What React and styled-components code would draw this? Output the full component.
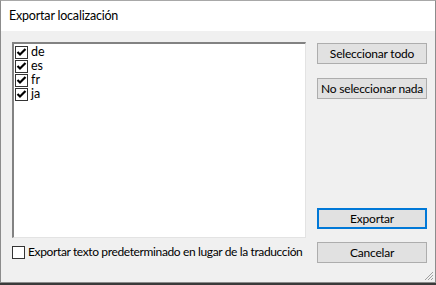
import React, { useState } from 'react';
import styled, { createGlobalStyle } from 'styled-components';

const GlobalStyle = createGlobalStyle`
  html, body {
    margin: 0;
    padding: 0;
    width: 436px;
    height: 285px;
    overflow: hidden;
    background: #3a3a3a;
  }
  * { box-sizing: border-box; }
`;

const Window = styled.div`
  width: 436px;
  height: 283px;
  display: flex;
  flex-direction: column;
  border: 1px solid #8c8c8c;
  border-top-color: #a8a8a8;
  background: #f0f0f0;
  font-family: Lato, "Noto Sans", sans-serif;
  font-size: 12px;
  letter-spacing: -0.37px;
  color: #000;
  position: relative;
`;

const TitleBar = styled.div`
  height: 30px;
  background: #fff;
  display: flex;
  align-items: center;
  padding-left: 8px;
  padding-bottom: 2px;
  font-size: 12.5px;
  letter-spacing: -0.2px;
`;

const Body = styled.div`
  flex: 1;
  display: grid;
  grid-template-columns: 294px 110px;
  column-gap: 11px;
  padding: 11px 9px 19px 11px;
`;

const LeftColumn = styled.div`
  display: flex;
  flex-direction: column;
`;

const ListBox = styled.div`
  height: 196px;
  background: #fff;
  border-style: solid;
  border-width: 2px 1px 1px 2px;
  border-color: #828282 #e3e3e3 #e3e3e3 #828282;
  padding: 1px 0 0 1px;
`;

const Item = styled.label`
  height: 14px;
  display: flex;
  align-items: center;
  gap: 3px;
  line-height: 14px;
  cursor: default;
`;

const Box = styled.span`
  width: 13px;
  height: 13px;
  flex: none;
  border: 1px solid #333;
  background: #fff;
  display: flex;
  align-items: center;
  justify-content: center;
`;

const Label = styled.span`
  white-space: nowrap;
  font-size: ${p => p.$large ? '12.5px' : '12px'};
  letter-spacing: ${p => p.$large ? '0' : 'inherit'};
`;

const OptionRow = styled.label`
  display: flex;
  align-items: center;
  gap: 3px;
  margin-top: 7px;
  height: 14px;
  line-height: 14px;
`;

const RightColumn = styled.div`
  display: flex;
  flex-direction: column;
  padding-top: 1px;
`;

const Button = styled.button`
  height: 21px;
  width: 110px;
  margin: 0;
  margin-top: ${p => p.$top || '0'};
  padding: 0 0 1px;
  background: #e1e1e1;
  border: ${p => p.$default ? '2px solid #0078d7' : '1px solid #adadad'};
  font-family: inherit;
  font-size: 12px;
  letter-spacing: -0.2px;
  color: #000;
  white-space: nowrap;
  cursor: default;
`;

const Grip = styled.svg`
  position: absolute;
  right: 1px;
  bottom: 1px;
`;

function Check({ on }) {
  return (
    <Box>
      {on && (
        <svg width="11" height="11" viewBox="0 0 11 11">
          <path d="M1.5 5 L4 7.5 L9.5 2" fill="none" stroke="#000" strokeWidth="2.2" />
        </svg>
      )}
    </Box>
  );
}

export default function App() {
  const [langs, setLangs] = useState({ de: true, es: true, fr: true, ja: true });
  const [defaults, setDefaults] = useState(false);

  const toggle = (k) => setLangs({ ...langs, [k]: !langs[k] });
  const setAll = (v) => setLangs({ de: v, es: v, fr: v, ja: v });

  return (
    <>
      <GlobalStyle />
      <Window>
        <TitleBar>Exportar localización</TitleBar>
        <Body>
          <LeftColumn>
            <ListBox>
              {Object.keys(langs).map(k => (
                <Item key={k} onClick={() => toggle(k)}>
                  <Check on={langs[k]} />
                  <Label $large>{k}</Label>
                </Item>
              ))}
            </ListBox>
            <OptionRow onClick={() => setDefaults(!defaults)}>
              <Check on={defaults} />
              <Label>Exportar texto predeterminado en lugar de la traducción</Label>
            </OptionRow>
          </LeftColumn>
          <RightColumn>
            <Button onClick={() => setAll(true)}>Seleccionar todo</Button>
            <Button $top="14px" onClick={() => setAll(false)}>No seleccionar nada</Button>
            <Button $top="auto" $default>Exportar</Button>
            <Button $top="13px">Cancelar</Button>
          </RightColumn>
        </Body>
        <Grip width="10" height="10" viewBox="0 0 10 10">
          <path d="M9 1 L1 9 M9 4 L4 9 M9 7 L7 9" stroke="#a0a0a0" strokeWidth="1" />
        </Grip>
      </Window>
    </>
  );
}
